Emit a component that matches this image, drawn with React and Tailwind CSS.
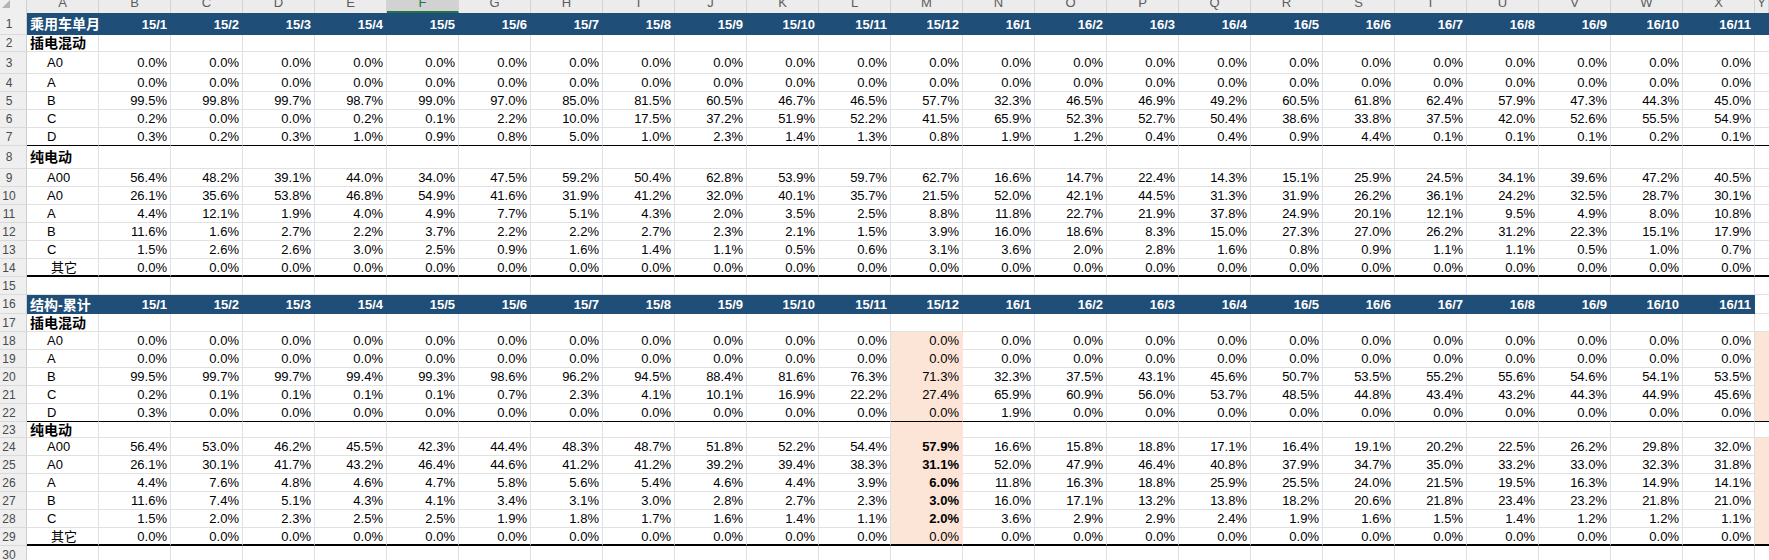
import React from 'react'

// 月份表头 B..X
const MONTHS = [...Array(12)].map((_, i) => `15/${i + 1}`).concat([...Array(11)].map((_, i) => `16/${i + 1}`))
const LETTERS = 'ABCDEFGHIJKLMNOPQRSTUVWXY'.split('')
const Z = Array(23).fill('0.0')
const v = (s) => s.split(' ')

const ROWS = [
  { h: 'h-[22px]', kind: 'head', label: '乘用车单月', wide: true },
  { h: 'h-[17px]', kind: 'sec', label: '插电混动' },
  { h: 'h-[22px]', label: 'A0', vals: Z },
  { h: 'h-[18px]', label: 'A', vals: Z },
  { h: 'h-[18px]', label: 'B', vals: v('99.5 99.8 99.7 98.7 99.0 97.0 85.0 81.5 60.5 46.7 46.5 57.7 32.3 46.5 46.9 49.2 60.5 61.8 62.4 57.9 47.3 44.3 45.0') },
  { h: 'h-[18px]', label: 'C', vals: v('0.2 0.0 0.0 0.2 0.1 2.2 10.0 17.5 37.2 51.9 52.2 41.5 65.9 52.3 52.7 50.4 38.6 33.8 37.5 42.0 52.6 55.5 54.9') },
  { h: 'h-[18px]', label: 'D', line: 'thin', vals: v('0.3 0.2 0.3 1.0 0.9 0.8 5.0 1.0 2.3 1.4 1.3 0.8 1.9 1.2 0.4 0.4 0.9 4.4 0.1 0.1 0.1 0.2 0.1') },
  { h: 'h-[23px]', kind: 'sec', label: '纯电动' },
  { h: 'h-[18px]', label: 'A00', vals: v('56.4 48.2 39.1 44.0 34.0 47.5 59.2 50.4 62.8 53.9 59.7 62.7 16.6 14.7 22.4 14.3 15.1 25.9 24.5 34.1 39.6 47.2 40.5') },
  { h: 'h-[18px]', label: 'A0', vals: v('26.1 35.6 53.8 46.8 54.9 41.6 31.9 41.2 32.0 40.1 35.7 21.5 52.0 42.1 44.5 31.3 31.9 26.2 36.1 24.2 32.5 28.7 30.1') },
  { h: 'h-[18px]', label: 'A', vals: v('4.4 12.1 1.9 4.0 4.9 7.7 5.1 4.3 2.0 3.5 2.5 8.8 11.8 22.7 21.9 37.8 24.9 20.1 12.1 9.5 4.9 8.0 10.8') },
  { h: 'h-[18px]', label: 'B', vals: v('11.6 1.6 2.7 2.2 3.7 2.2 2.2 2.7 2.3 2.1 1.5 3.9 16.0 18.6 8.3 15.0 27.3 27.0 26.2 31.2 22.3 15.1 17.9') },
  { h: 'h-[18px]', label: 'C', vals: v('1.5 2.6 2.6 3.0 2.5 0.9 1.6 1.4 1.1 0.5 0.6 3.1 3.6 2.0 2.8 1.6 0.8 0.9 1.1 1.1 0.5 1.0 0.7') },
  { h: 'h-[18px]', label: '其它', other: true, line: 'thick', vals: Z },
  { h: 'h-[18px]', kind: 'blank' },
  { h: 'h-[19px]', kind: 'head', label: '结构-累计' },
  { h: 'h-[18px]', kind: 'sec', label: '插电混动' },
  { h: 'h-[18px]', label: 'A0', vals: Z, peach: true, peachY: true },
  { h: 'h-[18px]', label: 'A', vals: Z, peach: true, peachY: true },
  { h: 'h-[18px]', label: 'B', peach: true, peachY: true, vals: v('99.5 99.7 99.7 99.4 99.3 98.6 96.2 94.5 88.4 81.6 76.3 71.3 32.3 37.5 43.1 45.6 50.7 53.5 55.2 55.6 54.6 54.1 53.5') },
  { h: 'h-[18px]', label: 'C', peach: true, peachY: true, vals: v('0.2 0.1 0.1 0.1 0.1 0.7 2.3 4.1 10.1 16.9 22.2 27.4 65.9 60.9 56.0 53.7 48.5 44.8 43.4 43.2 44.3 44.9 45.6') },
  { h: 'h-[18px]', label: 'D', peach: true, peachY: true, line: 'thin', vals: v('0.3 0.0 0.0 0.0 0.0 0.0 0.0 0.0 0.0 0.0 0.0 0.0 1.9 0.0 0.0 0.0 0.0 0.0 0.0 0.0 0.0 0.0 0.0') },
  { h: 'h-[16px]', kind: 'sec', label: '纯电动', peach: true },
  { h: 'h-[18px]', label: 'A00', peach: true, peachY: true, bold: true, vals: v('56.4 53.0 46.2 45.5 42.3 44.4 48.3 48.7 51.8 52.2 54.4 57.9 16.6 15.8 18.8 17.1 16.4 19.1 20.2 22.5 26.2 29.8 32.0') },
  { h: 'h-[18px]', label: 'A0', peach: true, peachY: true, bold: true, vals: v('26.1 30.1 41.7 43.2 46.4 44.6 41.2 41.2 39.2 39.4 38.3 31.1 52.0 47.9 46.4 40.8 37.9 34.7 35.0 33.2 33.0 32.3 31.8') },
  { h: 'h-[18px]', label: 'A', peach: true, peachY: true, bold: true, vals: v('4.4 7.6 4.8 4.6 4.7 5.8 5.6 5.4 4.6 4.4 3.9 6.0 11.8 16.3 18.8 25.9 25.5 24.0 21.5 19.5 16.3 14.9 14.1') },
  { h: 'h-[18px]', label: 'B', peach: true, peachY: true, bold: true, vals: v('11.6 7.4 5.1 4.3 4.1 3.4 3.1 3.0 2.8 2.7 2.3 3.0 16.0 17.1 13.2 13.8 18.2 20.6 21.8 23.4 23.2 21.8 21.0') },
  { h: 'h-[18px]', label: 'C', peach: true, peachY: true, bold: true, vals: v('1.5 2.0 2.3 2.5 2.5 1.9 1.8 1.7 1.6 1.4 1.1 2.0 3.6 2.9 2.9 2.4 1.9 1.6 1.5 1.4 1.2 1.2 1.1') },
  { h: 'h-[18px]', label: '其它', other: true, peach: true, peachY: true, line: 'thick', vals: Z },
  { h: 'h-[18px]', kind: 'blank' },
]

function bottomCls(row, peach) {
  if (row.line === 'thick') return 'border-b-2 border-b-black'
  if (row.line === 'thin') return 'border-b border-b-black'
  return peach ? 'border-b border-b-[#fce4d6]' : 'border-b border-b-[#e1e1e1]'
}

function RowNum({ n, h }) {
  return (
    <div className={`${h} w-[27px] shrink-0 bg-[#efefef] border-b border-b-[#dadada] border-r border-r-[#cfcfcf] flex items-center`}>
      <span className="w-[18px] text-center text-[12px] leading-[12px] text-[#4a4a4a]">{n}</span>
    </div>
  )
}

function SheetRow({ row, n }) {
  if (row.kind === 'head') {
    return (
      <div className="flex">
        <RowNum n={n} h={row.h} />
        <div className={`${row.h} w-[72px] shrink-0 bg-[#1f4e78] flex items-center pl-[3px] text-white font-bold text-[14px] leading-[14px] whitespace-nowrap`}>
          {row.label}
        </div>
        {MONTHS.map((m) => (
          <div key={m} className={`${row.h} w-[72px] shrink-0 bg-[#1f4e78] flex items-center justify-end pr-[4px] text-white font-bold text-[13px] leading-[13px]`}>
            {m}
          </div>
        ))}
        {row.wide ? (
          <div className={`${row.h} w-[14px] shrink-0 bg-[#1f4e78]`} />
        ) : (
          <div className={`${row.h} w-[14px] shrink-0 border-b border-b-[#e1e1e1]`} />
        )}
      </div>
    )
  }

  const cells = row.vals || Array(23).fill('')
  const labelCls =
    row.kind === 'sec'
      ? 'pl-[3px] font-bold text-[14px] leading-[14px]'
      : row.other
        ? 'pl-[24px] text-[13px] leading-[13px]'
        : 'pl-[20px] text-[13px] leading-[13px]'

  return (
    <div className="flex">
      <RowNum n={n} h={row.h} />
      <div className={`${row.h} w-[72px] shrink-0 flex items-center border-r border-r-[#e1e1e1] ${bottomCls(row)} ${labelCls} whitespace-nowrap`}>
        {row.label}
      </div>
      {cells.map((val, i) => {
        const peach = row.peach && i === 11
        return (
          <div
            key={i}
            className={`${row.h} w-[72px] shrink-0 flex items-center justify-end pr-[3px] text-[13px] leading-[13px] border-r ${
              peach ? 'bg-[#fce4d6] border-r-[#fce4d6]' : 'border-r-[#e1e1e1]'
            } ${bottomCls(row, peach)} ${peach && row.bold ? 'font-bold' : ''}`}
          >
            {val ? `${val}%` : ''}
          </div>
        )
      })}
      <div className={`${row.h} w-[14px] shrink-0 ${row.peachY ? 'bg-[#fce4d6]' : ''} ${bottomCls(row, row.peachY)}`} />
    </div>
  )
}

export default function App() {
  return (
    <div
      className="w-[1769px] h-[560px] overflow-hidden bg-white text-black"
      style={{ fontFamily: '"Liberation Sans", Arial, "Noto Sans CJK SC", sans-serif' }}
    >
      {/* 列标 */}
      <div className="flex h-[13px] overflow-hidden">
        <div className="w-[27px] h-[13px] shrink-0 bg-[#efefef] border-r border-r-[#cfcfcf] relative">
          <svg width="12" height="10" className="absolute left-0 top-0">
            <polygon points="10,0 10,8 2,8" fill="#b4b4b4" />
          </svg>
        </div>
        {LETTERS.map((l) => {
          const sel = l === 'F'
          return (
            <div
              key={l}
              className={`h-[13px] shrink-0 flex justify-center overflow-hidden border-r border-r-[#d4d4d4] ${
                l === 'Y' ? 'w-[14px]' : 'w-[72px]'
              } ${sel ? 'bg-[#d2d2d2] border-b-2 border-b-[#217346] text-[#217346]' : 'bg-[#ececec] text-[#5c5c5c]'}`}
            >
              <span className="-mt-[4px] text-[13px] leading-[13px]">{l}</span>
            </div>
          )
        })}
      </div>
      {ROWS.map((row, i) => (
        <SheetRow key={i} row={row} n={i + 1} />
      ))}
    </div>
  )
}
